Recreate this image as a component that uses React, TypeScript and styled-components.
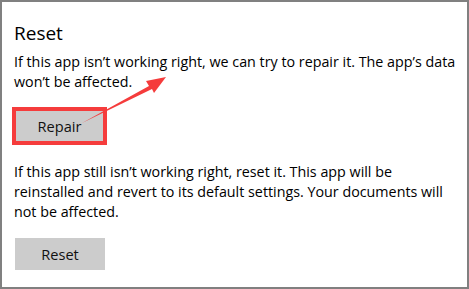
import React from 'react'
import styled, { createGlobalStyle } from 'styled-components'

const GlobalStyle = createGlobalStyle`
	html, body {
		margin: 0;
		padding: 0;
		background: #ffffff;
	}
	body {
		font-family: 'Open Sans', 'Noto Sans', sans-serif;
		color: #000000;
	}
`

const Frame = styled.div`
	position: relative;
	box-sizing: border-box;
	width: 469px;
	height: 289px;
	border: 2px solid #808080;
	background: #ffffff;
	padding: 18px 8px 0 12px;
	display: flex;
	flex-direction: column;
`

const Title = styled.h2`
	margin: 0;
	font-size: 19px;
	font-weight: 400;
	line-height: 26px;
`

const Text = styled.p`
	margin: 0;
	font-size: 14.3px;
	line-height: 20px;
	white-space: nowrap;
`

const Section = styled.div<{ $gap: number; $top: number }>`
	display: flex;
	flex-direction: column;
	align-items: flex-start;
	gap: ${(p) => p.$gap}px;
	margin-top: ${(p) => p.$top}px;
`

const Button = styled.button<{ $marked?: boolean }>`
	box-sizing: border-box;
	width: ${(p) => (p.$marked ? '95px' : '90px')};
	height: ${(p) => (p.$marked ? '38px' : '32px')};
	margin-left: ${(p) => (p.$marked ? '-2px' : '1px')};
	background: #cccccc;
	border: ${(p) => (p.$marked ? '4px solid #f53c3c' : 'none')};
	font-family: 'Open Sans', 'Noto Sans', sans-serif;
	font-size: 14.6px;
	color: #111111;
	padding: 0;
`

const Arrow = styled.svg`
	position: absolute;
	left: 0;
	top: 0;
	pointer-events: none;
`

export default function App() {
	return (
		<>
			<GlobalStyle />
			<Frame>
				<Title>Reset</Title>
				<Section $gap={15} $top={6}>
					<Text>
						If this app isn’t working right, we can try to repair it. The app’s data
						<br />
						won’t be affected.
					</Text>
					<Button $marked>Repair</Button>
				</Section>
				<Section $gap={16} $top={17}>
					<Text>
						If this app still isn’t working right, reset it. This app will be
						<br />
						reinstalled and revert to its default settings. Your documents will
						<br />
						not be affected.
					</Text>
					<Button>Reset</Button>
				</Section>
				<Arrow width="469" height="289" viewBox="0 0 469 289">
					<path d="M80 121 L147 84 L144 79 L164 75 L152 91 L150 87 Z" fill="#f53c3c" />
				</Arrow>
			</Frame>
		</>
	)
}
